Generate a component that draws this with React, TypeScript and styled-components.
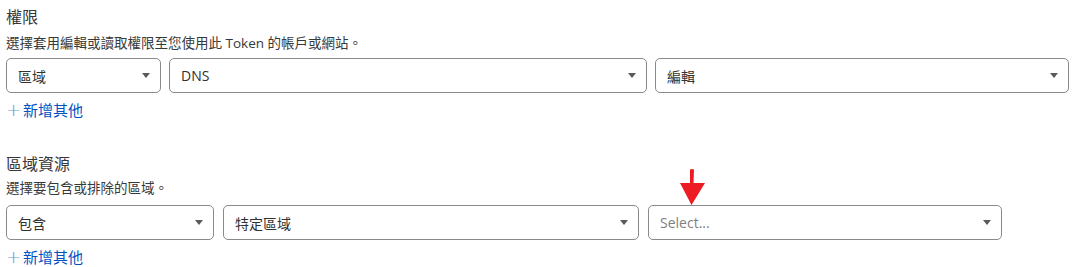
import React from 'react';
import styled, { createGlobalStyle } from 'styled-components';

const GlobalStyle = createGlobalStyle`
  body {
    margin: 0;
    background: #ffffff;
    font-family: "Open Sans", "Noto Sans CJK TC", sans-serif;
  }
`;

const Page = styled.div`
  position: relative;
  width: 1088px;
  height: 267px;
  padding: 6px 0 0 6px;
  box-sizing: border-box;
  overflow: hidden;
`;

const Section = styled.section<{ $top?: number }>`
  margin-top: ${p => p.$top ?? 0}px;
`;

const Title = styled.div`
  font-size: 16px;
  line-height: 22px;
  color: #363636;
`;

const Desc = styled.div<{ $gap: number }>`
  margin-top: ${p => p.$gap}px;
  font-size: 13.5px;
  line-height: 20px;
  color: #36393a;
`;

const Row = styled.div<{ $gap: number; $top: number }>`
  display: flex;
  gap: ${p => p.$gap}px;
  margin-top: ${p => p.$top}px;
`;

const SelectBox = styled.div<{ $w: number }>`
  display: flex;
  align-items: center;
  justify-content: space-between;
  box-sizing: border-box;
  width: ${p => p.$w}px;
  height: 35px;
  padding: 0 10px 0 11px;
  border: 1px solid #8a8a8a;
  border-radius: 5px;
  background: #ffffff;
`;

const Value = styled.span<{ $placeholder?: boolean }>`
  font-size: 14px;
  color: ${p => (p.$placeholder ? '#808080' : '#313131')};
`;

const Caret = styled.span`
  width: 0;
  height: 0;
  border-left: 4px solid transparent;
  border-right: 4px solid transparent;
  border-top: 5px solid #5a5a5a;
`;

const AddLink = styled.a`
  display: flex;
  align-items: center;
  gap: 3px;
  margin-top: 6px;
  font-size: 15px;
  line-height: 22px;
  color: #0051c3;
  cursor: pointer;
`;

const Plus = styled.span`
  width: 14px;
  font-family: "DejaVu Sans", sans-serif;
  font-size: 18px;
  font-weight: 200;
  line-height: 22px;
  color: #6b98d8;
`;

const Pointer = styled.svg`
  position: absolute;
  left: 677px;
  top: 168px;
`;

type Item = { w: number; text: string; placeholder?: boolean };

const Select: React.FC<Item> = ({ w, text, placeholder }) => (
  <SelectBox $w={w}>
    <Value $placeholder={placeholder}>{text}</Value>
    <Caret />
  </SelectBox>
);

const App: React.FC = () => {
  const permissions: Item[] = [
    { w: 155, text: '區域' },
    { w: 478, text: 'DNS' },
    { w: 414, text: '編輯' },
  ];
  const resources: Item[] = [
    { w: 208, text: '包含' },
    { w: 416, text: '特定區域' },
    { w: 354, text: 'Select...', placeholder: true },
  ];

  return (
    <>
      <GlobalStyle />
      <Page>
        <Section>
          <Title>權限</Title>
          <Desc $gap={5}>選擇套用編輯或讀取權限至您使用此 Token 的帳戶或網站。</Desc>
          <Row $gap={8} $top={5}>
            {permissions.map(p => (
              <Select key={p.text} {...p} />
            ))}
          </Row>
          <AddLink>
            <Plus>+</Plus>新增其他
          </AddLink>
        </Section>

        <Section $top={32}>
          <Title>區域資源</Title>
          <Desc $gap={3}>選擇要包含或排除的區域。</Desc>
          <Row $gap={9} $top={7}>
            {resources.map(p => (
              <Select key={p.text} {...p} />
            ))}
          </Row>
          <AddLink>
            <Plus>+</Plus>新增其他
          </AddLink>
        </Section>

        <Pointer width="30" height="38" viewBox="0 0 30 38">
          <path d="M13 1.5 Q15 0.5 17 1.5 L16.5 15 L28 15 L14.5 37 L3 15 L13 15 Z" fill="#ed1c24" />
        </Pointer>
      </Page>
    </>
  );
};

export default App;
